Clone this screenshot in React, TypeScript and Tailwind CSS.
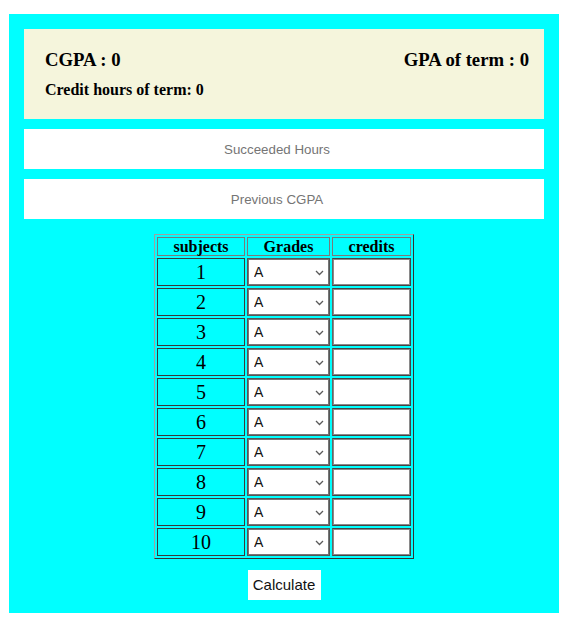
import React from "react";

const rows = [1, 2, 3, 4, 5, 6, 7, 8, 9, 10];

function Chevron() {
  return (
    <svg width="9" height="6" viewBox="0 0 9 6" className="absolute right-[5px] top-[11px] pointer-events-none">
      <path d="M1 1 L4.5 4.5 L8 1" fill="none" stroke="#5a5a5a" strokeWidth="1.3" />
    </svg>
  );
}

export default function App() {
  return (
    <div className="min-h-[625px] bg-white pt-[14px] pl-[9px] font-['Liberation_Serif',serif] text-black">
      <div className="w-[550px] bg-[#00ffff] px-[15px] pt-[15px] pb-[13px] flex flex-col items-center">
        <div className="w-full h-[90px] bg-[#f5f5dc] pt-[20px] pl-[21px] pr-[15px]">
          <div className="flex justify-between text-[18.72px] font-bold leading-[22px]">
            <span>CGPA : 0</span>
            <span>GPA of term : 0</span>
          </div>
          <div className="mt-[10px] text-[16px] font-bold leading-[18px]">Credit hours of term: 0</div>
        </div>
        <input
          placeholder="Succeeded Hours"
          className="mt-[10px] w-full h-[40px] bg-white text-center pr-[14px] text-[13.33px] font-['Liberation_Sans',Arial,sans-serif] placeholder:text-[#757575] outline-none border-0"
        />
        <input
          placeholder="Previous CGPA"
          className="mt-[10px] w-full h-[40px] bg-white text-center pr-[14px] text-[13.33px] font-['Liberation_Sans',Arial,sans-serif] placeholder:text-[#757575] outline-none border-0"
        />
        <div className="mt-[15px] border border-t-[#a0a0a0] border-l-[#a0a0a0] border-b-[#333] border-r-[#333] p-[2px] flex flex-col gap-[2px]">
          <div className="flex gap-[2px] h-[19px]">
            <div className="w-[88px] border border-[#7a7a7a] flex items-center justify-center text-[16px] font-bold leading-none">subjects</div>
            <div className="w-[83px] border border-[#7a7a7a] flex items-center justify-center text-[16px] font-bold leading-none">Grades</div>
            <div className="w-[79px] border border-[#7a7a7a] flex items-center justify-center text-[16px] font-bold leading-none">credits</div>
          </div>
          {rows.map((n) => (
            <div key={n} className="flex gap-[2px] h-[28px]">
              <div className="w-[88px] border border-[#3a3a3a] flex items-center justify-center text-[20px] leading-none">{n}</div>
              <div className="w-[83px] border border-[#555] relative bg-white">
                <select className="appearance-none w-full h-full border border-[#767676] bg-white pl-[5px] text-[14px] text-[#111] font-['Liberation_Sans',Arial,sans-serif] outline-none">
                  <option>A</option>
                  <option>A-</option>
                  <option>B+</option>
                  <option>B</option>
                  <option>B-</option>
                  <option>C+</option>
                  <option>C</option>
                  <option>C-</option>
                  <option>D+</option>
                  <option>D</option>
                  <option>F</option>
                </select>
                <Chevron />
              </div>
              <div className="w-[79px] border border-t-[#444] border-l-[#666] border-r-[#444] border-b-[#444]">
                <input className="w-full h-full border border-[#8a8a8a] bg-white outline-none" />
              </div>
            </div>
          ))}
        </div>
        <button className="mt-[11px] h-[30px] w-[73px] bg-white text-[15px] text-[#111] font-['Liberation_Sans',Arial,sans-serif] border-0">
          Calculate
        </button>
      </div>
    </div>
  );
}
